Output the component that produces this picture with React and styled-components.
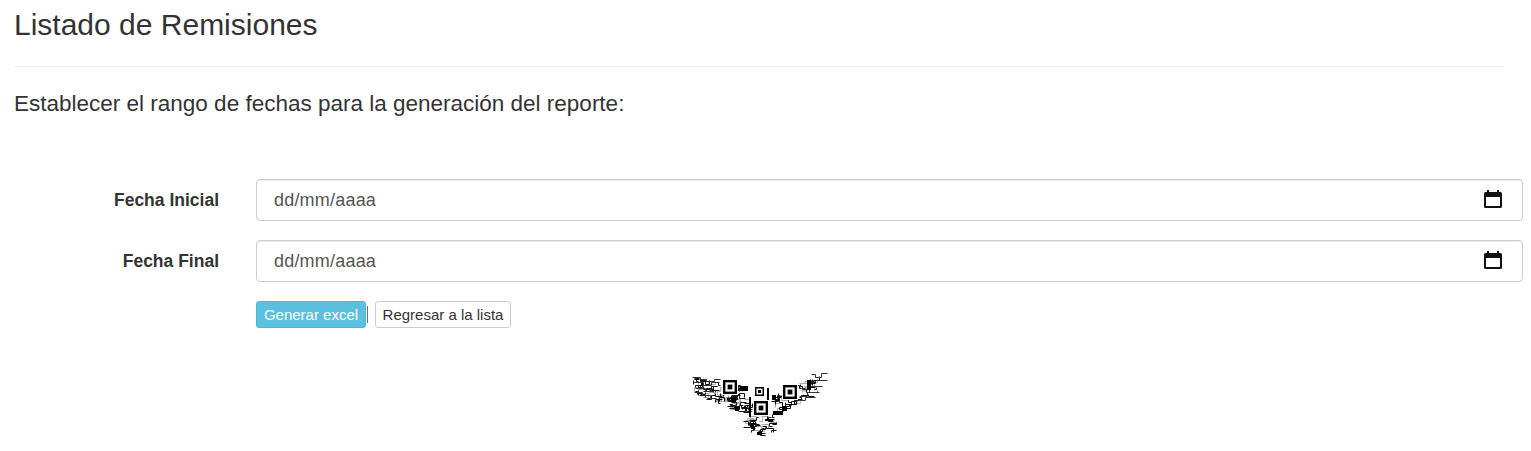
import React from "react";
import styled, { createGlobalStyle } from "styled-components";

const Global = createGlobalStyle`
  html, body { margin: 0; padding: 0; background: #fff; }
  body { font-family: "Liberation Sans", Arial, sans-serif; color: #333; }
`;
const Page = styled.div`
  padding: 0 8px 0 15px;
  height: 451px;
  box-sizing: border-box;
  overflow: hidden;
`;
const Title = styled.h1`
  margin: 0 0 0 -1px;
  padding-top: 8px;
  font-size: 30px;
  line-height: 33px;
  font-weight: 400;
  color: #333;
`;
const Rule = styled.hr`
  margin: 25px 19px 0 0;
  border: 0;
  border-top: 1px solid #eee;
`;
const Subtitle = styled.h2`
  margin: 22px 0 0 -1px;
  font-size: 22.5px;
  line-height: 30px;
  font-weight: 400;
  color: #333;
`;
const Form = styled.form`
  margin-top: 60px;
  display: flex;
  flex-direction: column;
  gap: 19px;
`;
const Row = styled.div`
  display: grid;
  grid-template-columns: 204px 1fr;
  column-gap: 37px;
  align-items: center;
`;
const Label = styled.label`
  text-align: right;
  font-size: 17.5px;
  font-weight: 700;
  line-height: 40px;
  color: #333;
`;
const DateField = styled.div`
  height: 42px;
  box-sizing: border-box;
  border: 1px solid #ccc;
  border-radius: 4px;
  box-shadow: inset 0 1px 1px rgba(0,0,0,.075);
  padding: 0 20px 0 17px;
  display: flex;
  align-items: center;
  justify-content: space-between;
  font-size: 18px;
  letter-spacing: 0.2px;
  color: #555;
`;
const Actions = styled.div`
  margin: 19px 0 0 241px;
  display: flex;
  align-items: center;
  height: 27px;
`;
const Button = styled.button`
  height: 27px;
  box-sizing: border-box;
  border-radius: 3px;
  border: 1px solid ${p => (p.$primary ? "#46b8da" : "#ccc")};
  background: ${p => (p.$primary ? "#5bc0de" : "#fff")};
  color: ${p => (p.$primary ? "#fff" : "#333")};
  font: 400 15px/20px "Liberation Sans", Arial, sans-serif;
  padding: 0;
  width: ${p => p.$w}px;
`;
const Divider = styled.span`
  width: 1px;
  height: 17px;
  margin: 0 7px 0 1px;
  background: #7a6f5f;
`;
const Logo = styled.div`
  margin-top: 42px;
  display: flex;
  justify-content: center;
  padding-right: 19px;
`;
const OwlSvg = styled.svg`
  display: block;
  filter: blur(0.3px);
`;
const CalSvg = styled.svg`
  display: block;
  margin-bottom: 2px;
`;

const CalIcon = () => (
  <CalSvg width="18" height="18" viewBox="0 0 18 18">
    <path
      fillRule="evenodd"
      fill="#111"
      d="M3 0h2v2h8V0h2v2h1.5A1.5 1.5 0 0 1 18 3.5v13a1.5 1.5 0 0 1-1.5 1.5h-15A1.5 1.5 0 0 1 0 16.500v-13A1.5 1.5 0 0 1 1.500 2H3z M2 7v9h14V7z"
    />
  </CalSvg>
);

const Finder = ({ x, y, s = 14 }) => (
  <g>
    <rect x={x - 1} y={y - 1} width={s + 2} height={s + 2} fill="#fff" />
    <rect x={x} y={y} width={s} height={s} fill="#000" />
    <rect x={x + s * 0.17} y={y + s * 0.17} width={s * 0.66} height={s * 0.66} fill="#fff" />
    <rect x={x + s * 0.33} y={y + s * 0.33} width={s * 0.34} height={s * 0.34} fill="#000" />
  </g>
);

/* Silhouette of the owl: left wing, right wing, body. */
const shapes = [
  [[0, 6], [32, 12], [48, 12], [62, 30], [62, 47], [40, 40], [27, 33], [10, 28], [2, 20]],
  [[137, 2], [123, 7], [107, 13], [88, 22], [80, 30], [80, 47], [97, 40], [113, 32], [130, 25], [124, 14]],
  [[58, 46], [84, 46], [93, 57], [70, 68], [47, 55]],
];
const inside = (px, py, poly) => {
  let hit = false;
  for (let i = 0, j = poly.length - 1; i < poly.length; j = i++) {
    const [xi, yi] = poly[i];
    const [xj, yj] = poly[j];
    if (yi > py !== yj > py && px < ((xj - xi) * (py - yi)) / (yj - yi) + xi) hit = !hit;
  }
  return hit;
};
const inOwl = (x, y) => shapes.some(s => inside(x, y, s));

/* Circuit-like traces: short right-angled walks kept inside the silhouette. */
const buildTraces = () => {
  let seed = 90210;
  const rnd = n => {
    seed = (seed * 1664525 + 1013904223) % 4294967296;
    return Math.floor((seed / 4294967296) * n);
  };
  const dark = [];
  const grey = [];
  for (let k = 0; k < 2000; k++) {
    let x = rnd(138);
    let y = rnd(70);
    if (!inOwl(x, y)) continue;
    let d = `M${x + 0.5} ${y + 0.5}`;
    let horizontal = rnd(4) > 0;
    let drawn = 0;
    const steps = 2 + rnd(3);
    for (let i = 0; i < steps; i++) {
      const len = horizontal ? 2 + rnd(6) : 2 + rnd(3);
      const sign = rnd(2) ? 1 : -1;
      const nx = horizontal ? x + sign * len : x;
      const ny = horizontal ? y : y + sign * len;
      if (!inOwl(nx, ny)) continue;
      d += horizontal ? `h${sign * len}` : `v${sign * len}`;
      x = nx;
      y = ny;
      horizontal = !horizontal;
      drawn++;
    }
    if (!drawn) continue;
    if (rnd(3) === 0) grey.push(d);
    else dark.push(d);
  }
  return { dark: dark.slice(0, 120).join(""), grey: grey.slice(0, 60).join("") };
};
const traces = buildTraces();
const blocks = [
  [49, 16, 8, 5], [40, 28, 5, 4], [44, 36, 4, 5], [82, 41, 10, 4], [91, 36, 5, 5], [81, 25, 4, 5],
  [116, 10, 4, 10], [58, 27, 2, 20], [76, 18, 2, 14], [66, 62, 5, 3], [60, 53, 3, 6], [74, 49, 8, 2],
];
const wingEdges =
  "M1.500 7.500h8v2h6v2h8v-2h6M2.500 12.500h10v3h8v-3h8M4.500 18.500h10v3h8M3.500 22.500h8v3h8v3h6" +
  "M136.500 3.500h-6v4h-6v-3h-4M136.500 10.500h-12v2h-6M131.500 16.500h-14v3h-6M128.500 22.500h-12v4h-8M124.500 27.500h-10v3h-8";

const Owl = () => (
  <OwlSvg width="138" height="76" viewBox="0 0 138 76" aria-label="logo">
    <path d={traces.grey} stroke="#aaa" strokeWidth="1" fill="none" />
    <path d={traces.dark} stroke="#111" strokeWidth="1" fill="none" />
    <path d={wingEdges} stroke="#333" strokeWidth="1" fill="none" />
    {blocks.map((b, i) => <rect key={i} x={b[0]} y={b[1]} width={b[2]} height={b[3]} fill="#000" />)}
    <Finder x={32} y={10} />
    <Finder x={92} y={15} />
    <Finder x={64} y={17} s={9} />
    <Finder x={63} y={31} />
  </OwlSvg>
);

export default function App() {
  return (
    <Page>
      <Global />
      <Title>Listado de Remisiones</Title>
      <Rule />
      <Subtitle>Establecer el rango de fechas para la generación del reporte:</Subtitle>
      <Form>
        <Row>
          <Label>Fecha Inicial</Label>
          <DateField>dd/mm/aaaa<CalIcon /></DateField>
        </Row>
        <Row>
          <Label>Fecha Final</Label>
          <DateField>dd/mm/aaaa<CalIcon /></DateField>
        </Row>
      </Form>
      <Actions>
        <Button type="button" $primary $w={110}>Generar excel</Button>
        <Divider />
        <Button type="button" $w={136}>Regresar a la lista</Button>
      </Actions>
      <Logo><Owl /></Logo>
    </Page>
  );
}
